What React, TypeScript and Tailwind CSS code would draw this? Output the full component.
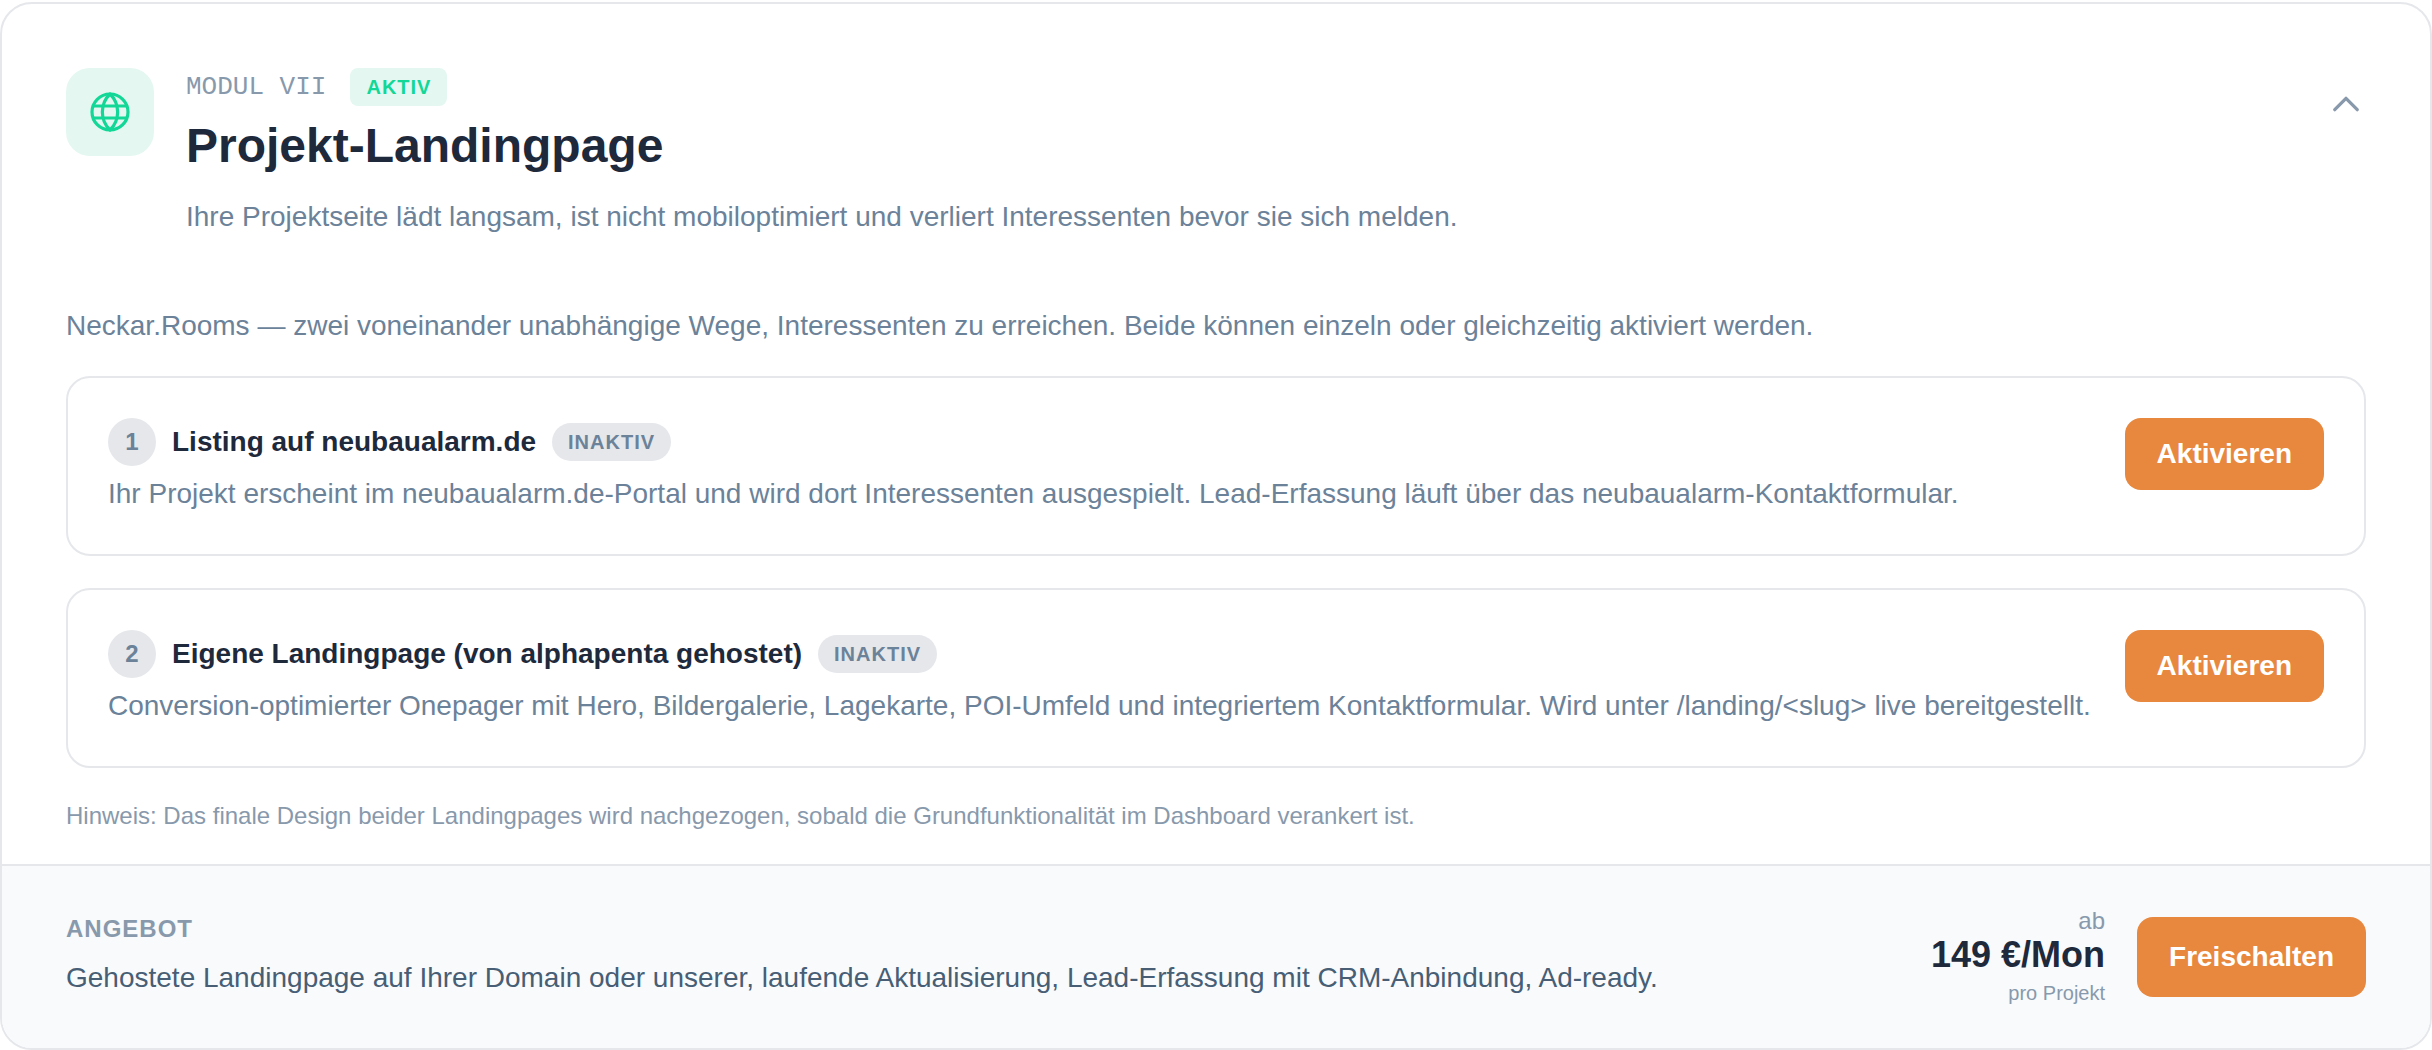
import React, { useState } from "react";

type Channel = {
  id: number;
  title: string;
  description: string;
};

const channels: Channel[] = [
  {
    id: 1,
    title: "Listing auf neubaualarm.de",
    description:
      "Ihr Projekt erscheint im neubaualarm.de-Portal und wird dort Interessenten ausgespielt. Lead-Erfassung läuft über das neubaualarm-Kontaktformular.",
  },
  {
    id: 2,
    title: "Eigene Landingpage (von alphapenta gehostet)",
    description:
      "Conversion-optimierter Onepager mit Hero, Bildergalerie, Lagekarte, POI-Umfeld und integriertem Kontaktformular. Wird unter /landing/<slug> live bereitgestellt.",
  },
];

const GlobeIcon = () => (
  <svg
    className="size-10"
    viewBox="0 0 40 40"
    fill="none"
    stroke="currentColor"
    strokeWidth="3.2"
    strokeLinejoin="round"
    aria-hidden="true"
  >
    <circle cx="20" cy="20" r="18" />
    <path d="M3 14h34M3 26h34" />
    <path d="M20 2A25 25 0 0 1 20 38A25 25 0 0 1 20 2z" />
  </svg>
);

const ChevronIcon = ({ open }: { open: boolean }) => (
  <svg
    className={open ? "size-9" : "size-9 rotate-180"}
    viewBox="0 0 24 24"
    fill="none"
    stroke="currentColor"
    strokeWidth="2.2"
    strokeLinecap="round"
    strokeLinejoin="round"
    aria-hidden="true"
  >
    <path d="m19.5 15.75-7.5-7.5-7.5 7.5" />
  </svg>
);

const ChannelCard = ({ channel }: { channel: Channel }) => (
  <li className="flex items-start justify-between gap-8 rounded-3xl border-2 border-[#e5e7eb] p-10">
    <div className="min-w-0">
      <div className="flex items-center gap-4">
        <span className="flex size-12 shrink-0 items-center justify-center rounded-full bg-[#e5e7eb] text-2xl font-bold text-[#6b8299]">
          {channel.id}
        </span>
        <h3 className="text-[28px] leading-10 font-bold text-[#1e293b]">{channel.title}</h3>
        <span className="rounded-full bg-[#e5e7eb] px-4 py-1 text-xl leading-[30px] font-bold tracking-[1px] text-[#6b8299]">
          INAKTIV
        </span>
      </div>
      <p className="mt-2 text-[28px] leading-10 text-[#6b8299]">{channel.description}</p>
    </div>
    <button
      type="button"
      className="shrink-0 rounded-2xl bg-[#e8873e] px-8 py-4 text-[28px] leading-10 font-bold text-white"
    >
      Aktivieren
    </button>
  </li>
);

const App = () => {
  const [open, setOpen] = useState(true);

  return (
    <div className="bg-white pt-0.5 font-['Liberation_Sans',Arial,sans-serif]">
      <section className="overflow-hidden rounded-[32px] border-2 border-[#e5e7eb] bg-white">
        <header className="flex items-start gap-8 p-16">
          <div className="flex size-22 shrink-0 items-center justify-center rounded-3xl bg-[#e4f7f1] text-[#12d796]">
            <GlobeIcon />
          </div>
          <div className="min-w-0 flex-1">
            <div className="flex items-center gap-6">
              <span className="font-['Liberation_Mono','Courier_New',monospace] text-[26px] leading-9 text-[#8899ac]">
                MODUL VII
              </span>
              <span className="rounded-lg bg-[#e4f7f1] px-4 py-1 text-xl leading-[30px] font-bold tracking-[1px] text-[#12d796]">
                AKTIV
              </span>
            </div>
            <h2 className="mt-2 text-5xl leading-[64px] font-bold text-[#1e293b]">Projekt-Landingpage</h2>
            <p className="mt-4 text-[28px] leading-[45px] text-[#6b8299]">
              Ihre Projektseite lädt langsam, ist nicht mobiloptimiert und verliert Interessenten bevor sie sich melden.
            </p>
          </div>
          <button
            type="button"
            aria-label="Modul ein- oder ausklappen"
            aria-expanded={open}
            onClick={() => setOpen(!open)}
            className="mt-4 flex size-10 shrink-0 items-center justify-center text-[#8899ac]"
          >
            <ChevronIcon open={open} />
          </button>
        </header>

        {open && (
          <div className="px-16 pb-7">
            <p className="text-[28px] leading-[45px] text-[#6b8299]">
              Neckar.Rooms — zwei voneinander unabhängige Wege, Interessenten zu erreichen. Beide können einzeln oder
              gleichzeitig aktiviert werden.
            </p>
            <ul className="mt-7 flex flex-col gap-8">
              {channels.map((channel) => (
                <ChannelCard key={channel.id} channel={channel} />
              ))}
            </ul>
            <p className="mt-7 text-2xl leading-10 text-[#8899ac]">
              Hinweis: Das finale Design beider Landingpages wird nachgezogen, sobald die Grundfunktionalität im
              Dashboard verankert ist.
            </p>
          </div>
        )}

        <footer className="flex items-center gap-8 border-t-2 border-[#e5e7eb] bg-[#f8fafc] px-16 py-10">
          <div className="min-w-0 flex-1 pb-1">
            <h3 className="text-2xl leading-9 font-bold tracking-[1px] text-[#8899ac]">ANGEBOT</h3>
            <p className="mt-2 text-[28px] leading-[45px] text-[#475e75]">
              Gehostete Landingpage auf Ihrer Domain oder unserer, laufende Aktualisierung, Lead-Erfassung mit
              CRM-Anbindung, Ad-ready.
            </p>
          </div>
          <div className="shrink-0 text-right text-[#8899ac]">
            <div className="text-2xl leading-[30px]">ab</div>
            <div className="text-4xl leading-[38px] font-bold text-[#1e293b]">149 €/Mon</div>
            <div className="mt-1 text-xl leading-[30px]">pro Projekt</div>
          </div>
          <button
            type="button"
            className="shrink-0 rounded-2xl bg-[#e8873e] px-8 py-5 text-[28px] leading-10 font-bold text-white"
          >
            Freischalten
          </button>
        </footer>
      </section>
    </div>
  );
};

export default App;
